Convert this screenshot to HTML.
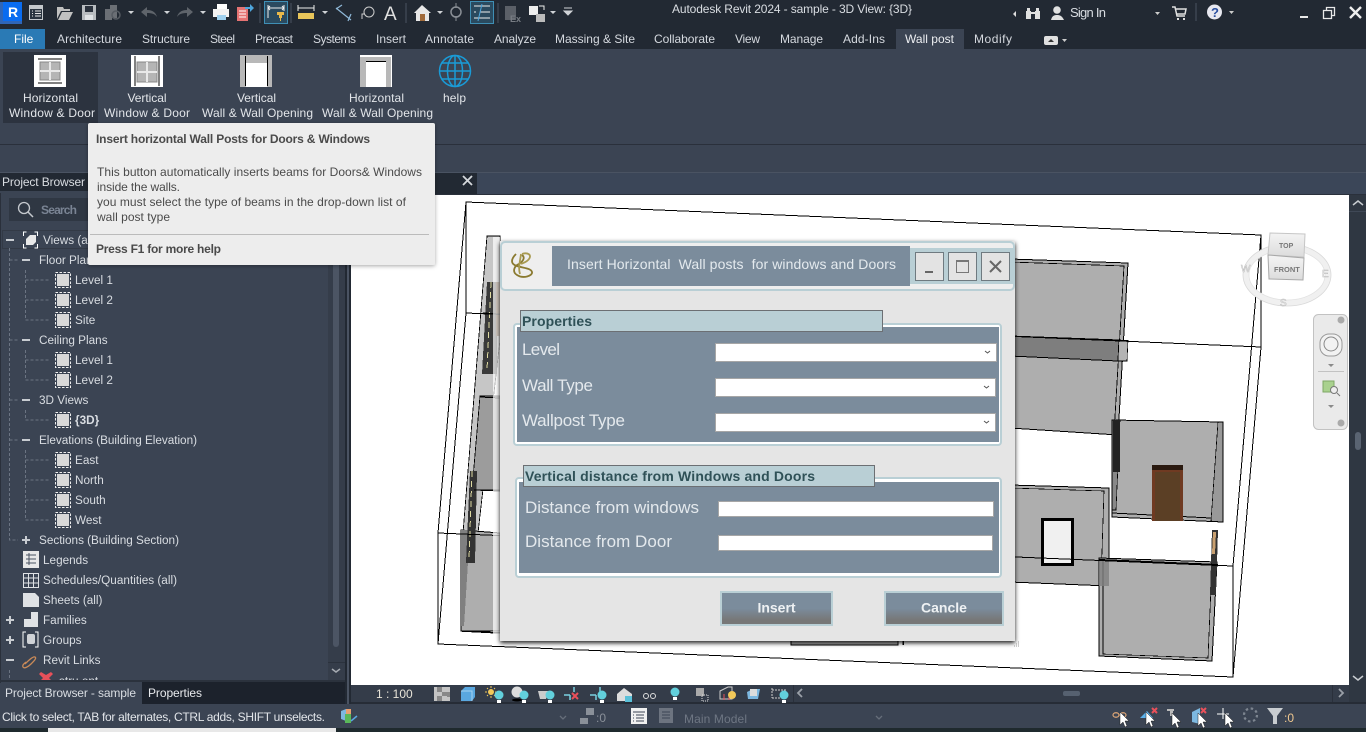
<!DOCTYPE html>
<html><head><meta charset="utf-8"><title>Autodesk Revit 2024</title>
<style>
html,body{margin:0;padding:0;width:1366px;height:732px;overflow:hidden;background:#3b4453}
svg{display:block}
text{font-family:"Liberation Sans",sans-serif;font-size:12px;fill:#d9dde2}
.tab{fill:#d5d9df}
.rb{fill:#e2e5e9;text-anchor:middle}
.tt{fill:#4a4a4a}
.lb{font-size:17px;fill:#e4e9ed}
.gh{font-size:14px;font-weight:bold;fill:#2f5157}
.dl{fill:none;stroke:#000;stroke-width:1}
.w{fill:#aeaeae;stroke:#000;stroke-width:1}
.tr text{font-size:11.75px}
</style></head><body>
<svg width="1366" height="732" viewBox="0 0 1366 732" xmlns="http://www.w3.org/2000/svg">
<defs>
<filter id="ds" x="-10%" y="-10%" width="120%" height="120%"><feDropShadow dx="0" dy="2" stdDeviation="2.500" flood-color="#000" flood-opacity=".9"/></filter>
<filter id="ts" x="-5%" y="-5%" width="110%" height="115%"><feDropShadow dx="0" dy="1" stdDeviation="2" flood-color="#000" flood-opacity=".35"/></filter>
<linearGradient id="bt" x1="0" y1="0" x2="0" y2="1"><stop offset=".5" stop-color="#7b8c9c"/><stop offset=".85" stop-color="#777"/></linearGradient>
<linearGradient id="cube" x1="0" y1="0" x2="0" y2="1"><stop offset="0" stop-color="#f4f4f4"/><stop offset="1" stop-color="#dcdcdc"/></linearGradient>
<clipPath id="tree"><rect x="0" y="228" width="328" height="452"/></clipPath>
<clipPath id="view"><rect x="351" y="195" width="998" height="490"/></clipPath>
<g id="lv"><rect x="55.500" y="-7.500" width="15" height="15" fill="#3b4453" stroke="#f0f0f0" stroke-dasharray="2.500 1.500"/><rect x="57" y="-6" width="12" height="12" fill="#d8d8d8"/></g>
<g id="cur"><path d="M0 0v13l3-3 2 5 2-1-2-5h4z" fill="#fff" stroke="#222" stroke-width=".5"/></g>
<g id="bulb"><circle cx="0" cy="0" r="4.500" fill="#62d0dc"/><rect x="-2" y="5" width="4" height="3" fill="#fff"/></g>
</defs>

<!-- base -->
<rect width="1366" height="732" fill="#3b4453"/>
<rect width="1366" height="49" fill="#222933"/>
<rect y="144" width="1366" height="1" fill="#2a303b"/>
<rect y="172" width="1366" height="1" fill="#4a5362"/>

<!-- QAT -->
<rect x="0" y="2" width="22" height="22" fill="#2f66b8"/><rect x="3" y="2" width="19" height="19" fill="#0a6cf0"/>
<text x="8" y="17" style="font-size:14px;font-weight:bold;fill:#fff">R</text>
<rect x="29.500" y="5.500" width="13" height="14" fill="#2a3440" stroke="#c4c8cc"/><rect x="30" y="6" width="12" height="3" fill="#c4c8cc"/><path d="M35 11h6M35 13.500h6M35 16h6M32 11h1M32 13.500h1M32 16h1" stroke="#e8e8e8"/>
<path d="M57 19V7h6l1 2h6v2h-9l-4 8zM58 20l4-8h11l-4 8z" fill="#c0c0c0"/>
<path d="M82 5h14v15H82z" fill="#b8bcc0"/><rect x="85" y="6" width="8" height="6" fill="#2a313c"/><rect x="85" y="15" width="8" height="5" fill="#dfe2e5"/>
<g fill="#6b6f75"><rect x="105" y="9" width="7" height="11"/><rect x="110" y="5" width="7" height="13"/></g><circle cx="116" cy="15" r="4" fill="none" stroke="#555a61" stroke-width="1.500"/>
<path d="M128 11h6l-3 3zM164 11h6l-3 3zM200 11h6l-3 3zM322 11h6l-3 3zM437 11h6l-3 3zM550 11h6l-3 3z" fill="#d0d3d7"/>
<path d="M141 12l6-5v3c6 0 9 3 10 7-2-3-5-4-10-4v4z" fill="#5f646b"/>
<path d="M193 12l-6-5v3c-6 0-9 3-10 7 2-3 5-4 10-4v4z" fill="#5f646b"/>
<rect x="217" y="4" width="10" height="5" fill="#fff"/><rect x="213" y="9" width="16" height="8" fill="#f2f2f2"/><rect x="217" y="15" width="9" height="5" fill="#9fd0ee"/>
<rect x="237" y="7" width="11" height="14" fill="#e57373"/><path d="M239 11h7M239 14h7M239 17h7" stroke="#fff"/><path d="M245 7h5V4l4 4-4 4V9h-5z" fill="#4ea6dc"/>
<path d="M260 3v20M291 3v20M406 3v20M498 3v20" stroke="#4a5362"/>
<rect x="264.500" y="1.500" width="23" height="22" fill="#2a4a5f" stroke="#3f8fb5"/><path d="M268 5v13M284 5v6M268 8h16M268 8l2-2M268 8l2 2M284 8l-2-2M284 8l-2 2" stroke="#eee" fill="none"/><path d="M277 12h7v3h-2v3h-3v-3h-2z" fill="#e8b94a"/><rect x="280" y="18" width="1" height="3" fill="#e8b94a"/>
<rect x="298" y="13" width="16" height="6" fill="#e8c55a"/><path d="M298 8h16M298 5v6M314 5v6" stroke="#eee" fill="none"/>
<path d="M336 8l15 12M342 5l-6 4M351 14l-3 7" stroke="#8fb8d8" stroke-width="1.200" fill="none"/>
<circle cx="369" cy="12" r="5" fill="none" stroke="#ccc"/><path d="M362 19v-5h3" stroke="#ccc" fill="none"/>
<text x="384" y="20" style="font-size:19px;fill:#e0e0e0">A</text>
<path d="M414 13l8-8 9 8h-2v8h-13v-8z" fill="#e8e8e8"/><rect x="420" y="14" width="5" height="7" fill="#a06a3a"/>
<circle cx="456" cy="12" r="5" fill="none" stroke="#8a8f96" stroke-width="1.500"/><path d="M456 3v5M456 16v5" stroke="#8a8f96"/>
<rect x="470.500" y="1.500" width="23" height="22" fill="#2a4a5f" stroke="#3f8fb5"/><path d="M474 6h16M480 12h10M474 18h16M474 12h2" stroke="#eee"/><path d="M482 4l-4 17" stroke="#4ea6dc"/>
<rect x="505" y="6" width="11" height="14" fill="#5b6068"/><text x="510" y="22" style="font-size:9px;font-weight:bold;fill:#777c83">Ex</text>
<rect x="529" y="6" width="9" height="9" fill="#eee"/><rect x="536" y="14" width="9" height="8" fill="#bbb"/><path d="M539 6h5v4" stroke="#eee" fill="none"/>
<path d="M564 8h8M564 11h8l-4 4z" fill="#d0d3d7" stroke="#d0d3d7"/>

<text x="672" y="13" textLength="240">Autodesk Revit 2024 - sample - 3D View: {3D}</text>
<path d="M1016 11l-3 3 3 3z" fill="#ddd"/>
<path d="M1027 8h3v3h1v8h-5v-8h1zM1036 8h3v3h1v8h-5v-8h1z" fill="#e0e0e0"/><rect x="1031" y="12" width="4" height="2" fill="#e0e0e0"/>
<circle cx="1057" cy="10" r="3.800" fill="#e0e0e0"/><path d="M1051 20c1-4 3-5 6-5s5 1 7 5z" fill="#e0e0e0"/>
<text x="1070" y="17" style="font-size:13px" textLength="36">Sign In</text>
<path d="M1155 12h5l-2.500 3zM1229 11h5l-2.500 3z" fill="#ccc"/>
<path d="M1172 7h3l2 9h8M1176 9h10l-1 5h-8" fill="none" stroke="#e0e0e0" stroke-width="1.500"/><path d="M1177 18h2v2h-2zM1183 18h2v2h-2z" fill="#e0e0e0"/>
<path d="M1196 3v18" stroke="#4a5362"/>
<circle cx="1214.500" cy="12" r="7.500" fill="#e8e8f0"/><text x="1211" y="17" style="font-size:13px;font-weight:bold;fill:#2a4fa0">?</text>
<rect x="1300" y="16" width="8" height="2" fill="#e8e8e8"/>
<path d="M1326.500 10.500v-3h8v8h-3M1323.500 10.500h8v8h-8z" fill="none" stroke="#e8e8e8" stroke-width="1.300"/>
<path d="M1350 7l11 11M1361 7l-11 11" stroke="#eee" stroke-width="2.400"/>

<!-- tabs -->
<rect x="0" y="29" width="45" height="20" fill="#2a7ab5"/>
<text x="14" y="43" style="fill:#fff">File</text>
<rect x="896" y="29" width="68" height="20" fill="#3b4453"/>
<g class="tabs">
<text class="tab" x="57" y="43" textLength="65">Architecture</text>
<text class="tab" x="142" y="43" textLength="48">Structure</text>
<text class="tab" x="210" y="43" textLength="25">Steel</text>
<text class="tab" x="255" y="43" textLength="38">Precast</text>
<text class="tab" x="313" y="43" textLength="43">Systems</text>
<text class="tab" x="376" y="43" textLength="30">Insert</text>
<text class="tab" x="425" y="43" textLength="49">Annotate</text>
<text class="tab" x="494" y="43" textLength="42">Analyze</text>
<text class="tab" x="555" y="43" textLength="80">Massing &amp; Site</text>
<text class="tab" x="654" y="43" textLength="61">Collaborate</text>
<text class="tab" x="735" y="43" textLength="25">View</text>
<text class="tab" x="780" y="43" textLength="43">Manage</text>
<text class="tab" x="843" y="43" textLength="42">Add-Ins</text>
<text class="tab" x="905" y="43" textLength="49" style="fill:#eceef1">Wall post</text>
<text class="tab" x="974" y="43" textLength="38">Modify</text>
</g>
<rect x="1044" y="36" width="14" height="9" rx="2" fill="#e0e0e0"/><path d="M1048 42l3-3 3 3z" fill="#333"/><path d="M1062 39h5l-2.500 3z" fill="#ccc"/>

<!-- ribbon buttons -->
<rect x="3" y="52" width="95" height="71" fill="#2c333f"/>
<g>
<rect x="34" y="55" width="32" height="32" fill="#fff"/><rect x="40" y="62" width="20" height="18" fill="#b5b5b5" stroke="#888"/><path d="M50 62v18M40 71h20" stroke="#e8e8e8" stroke-width="2"/><path d="M38 59h24M38 83h24" stroke="#000"/>
<rect x="131" y="55" width="32" height="32" fill="#fff"/><rect x="137" y="62" width="20" height="20" fill="#b5b5b5" stroke="#888"/><path d="M147 62v20M137 72h20" stroke="#e8e8e8" stroke-width="2"/><path d="M135 56v30M159 56v30" stroke="#000"/>
<rect x="240" y="55" width="32" height="32" fill="#b8b8b8"/><rect x="246" y="63" width="21" height="24" fill="#fff"/><path d="M245.500 56v30M267.500 56v30" stroke="#000"/>
<rect x="360" y="55" width="32" height="32" fill="#b8b8b8"/><rect x="360" y="55" width="32" height="2" fill="#fff"/><rect x="391" y="55" width="1" height="32" fill="#fff"/><rect x="366" y="62" width="20" height="25" fill="#fff"/><path d="M366 61.500h20" stroke="#000"/>
<g fill="none" stroke="#1a9bd7" stroke-width="1.500"><circle cx="455" cy="71" r="15.500"/><ellipse cx="455" cy="71" rx="7.500" ry="15.500"/><path d="M455 55v32M440 71h31M442 63h26M442 79h26"/></g>
</g>
<text class="rb" x="50.500" y="102" textLength="55">Horizontal</text><text class="rb" x="52" y="117" textLength="86">Window &amp; Door</text>
<text class="rb" x="147" y="102" textLength="39">Vertical</text><text class="rb" x="147" y="117" textLength="86">Window &amp; Door</text>
<text class="rb" x="256.500" y="102" textLength="39">Vertical</text><text class="rb" x="257.500" y="117" textLength="111">Wall &amp; Wall Opening</text>
<text class="rb" x="376.500" y="102" textLength="55">Horizontal</text><text class="rb" x="377.500" y="117" textLength="111">Wall &amp; Wall Opening</text>
<text class="rb" x="454.500" y="102" textLength="23">help</text>

<!-- project browser -->
<rect x="0" y="173" width="345" height="18" fill="#222933"/>
<text x="2" y="186" textLength="83">Project Browser</text>
<rect x="9" y="198" width="90" height="23" fill="#2f3743"/>
<circle cx="24" cy="208" r="5.500" fill="none" stroke="#c5c9ce" stroke-width="1.300"/><path d="M28 212l5 5" stroke="#c5c9ce" stroke-width="1.500"/>
<text x="41" y="214" style="font-weight:bold;fill:#7a8494" textLength="36">Search</text>
<rect x="2.500" y="230.500" width="326" height="18" fill="none" stroke="#333a46"/>
<rect x="328" y="225" width="17" height="457" fill="#353d4a"/>
<rect x="333" y="225" width="6" height="422" rx="3" fill="#4c5564"/>
<path d="M332 669l4 3 4-3" fill="none" stroke="#a5aab1" stroke-width="1.500"/>
<rect x="328" y="662" width="17" height="1" fill="#2b323d"/>
<rect x="0" y="193" width="1" height="490" fill="#2a303b"/>
<rect x="345" y="173" width="6" height="531" fill="#222933"/><rect x="347" y="173" width="2" height="531" fill="#4a5362"/>

<g clip-path="url(#tree)" class="tr">
<g fill="none" stroke="#6b7482" stroke-dasharray="3 2">
<path d="M9.500 248V540H18M9.500 260H18M9.500 340H18M9.500 400H18M9.500 440H18"/>
<path d="M25.500 270V320H50M25.500 280H50M25.500 300H50M25.500 350V380H50M25.500 360H50M25.500 410V420H50M25.500 450V520H50M25.500 460H50M25.500 480H50M25.500 500H50M9.500 670V690"/>
</g>
<path d="M6 239h8v2H6zM22 259h8v2h-8zM22 339h8v2h-8zM22 399h8v2h-8zM22 439h8v2h-8zM22 539h8v2h-8zM25 536h2v8h-2zM6 619h8v2H6zM9 616h2v8H9zM6 639h8v2H6zM9 636h2v8H9zM6 659h8v2H6z" fill="#c8ccd1"/>
<path d="M23.500 236v-4h3M34.500 232h3v4M37.500 244v4h-3M26.500 248h-3v-4" fill="none" stroke="#fff"/>
<path d="M26 239l4-4h6v7l-3 3h-7z" fill="#e8e8e8"/>
<text x="43" y="244">Views (all)</text>
<text x="39" y="264">Floor Plans</text>
<use href="#lv" y="280"/><text x="75" y="284">Level 1</text>
<use href="#lv" y="300"/><text x="75" y="304">Level 2</text>
<use href="#lv" y="320"/><text x="75" y="324">Site</text>
<text x="39" y="344">Ceiling Plans</text>
<use href="#lv" y="360"/><text x="75" y="364">Level 1</text>
<use href="#lv" y="380"/><text x="75" y="384">Level 2</text>
<text x="39" y="404">3D Views</text>
<use href="#lv" y="420"/><text x="75" y="424" style="font-weight:bold">{3D}</text>
<text x="39" y="444" textLength="158">Elevations (Building Elevation)</text>
<use href="#lv" y="460"/><text x="75" y="464">East</text>
<use href="#lv" y="480"/><text x="75" y="484">North</text>
<use href="#lv" y="500"/><text x="75" y="504">South</text>
<use href="#lv" y="520"/><text x="75" y="524">West</text>
<text x="39" y="544" textLength="140">Sections (Building Section)</text>
<rect x="23" y="551" width="16" height="17" fill="#e8e8e8"/><path d="M26 555h10M26 559h10M26 563h10M29 553v12" stroke="#4a5362"/>
<text x="43" y="564">Legends</text>
<path d="M23.500 573.500h15v14h-15zM23.500 578h15M23.500 583h15M28.500 574v13M33.500 574v13" fill="none" stroke="#dfe2e5"/>
<text x="43" y="584" textLength="134">Schedules/Quantities (all)</text>
<path d="M23 593h12l4 4v10H23z" fill="#dfe2e5"/>
<text x="43" y="604">Sheets (all)</text>
<path d="M24 612h14v15H24z" fill="#dfe2e5"/><path d="M24 612h7v7h-7z" fill="#3b4453"/>
<text x="43" y="624">Families</text>
<path d="M26 632h-3v15h3M35 632h3v15h-3" fill="none" stroke="#fff"/><rect x="27" y="634" width="8" height="10" rx="2" fill="#cfd2d6"/>
<text x="43" y="644">Groups</text>
<path d="M25 664c3-3 8-8 10-7 2 1-1 4-4 7s-7 5-8 3 1-3 3-5" fill="none" stroke="#c98a58" stroke-width="1.300"/>
<text x="43" y="664">Revit Links</text>
<path d="M41 672l5 3 5-3 2 2-4 4 4 4-14 0 4-4-4-4z" fill="#e8505a"/>
<text x="59" y="685">stru.ont</text>
</g>

<!-- bottom panel tabs -->
<rect x="0" y="680" width="345" height="2" fill="#2b323d"/>
<rect x="142" y="682" width="203" height="22" fill="#1c222c"/>
<text x="5" y="697" textLength="131">Project Browser - sample</text>
<text x="148" y="697" textLength="54" style="fill:#e8eaed">Properties</text>

<!-- doc tab strip -->
<rect x="351" y="173" width="1015" height="21" fill="#3b4658"/>
<rect x="435" y="173" width="42" height="21" fill="#222933"/>
<path d="M463 176l9 9M472 176l-9 9" stroke="#d5d8dc" stroke-width="1.800"/>
<rect x="351" y="194" width="1015" height="1" fill="#2a303b"/>

<!-- view -->
<rect x="351" y="195" width="998" height="490" fill="#fff"/>
<rect x="1349" y="195" width="17" height="507" fill="#2f3742"/>
<path d="M1353 205l5-4 5 4" fill="none" stroke="#c8ccd0" stroke-width="1.500"/>
<rect x="1349" y="211" width="17" height="1" fill="#3f4856"/>
<rect x="1355" y="432" width="6" height="18" rx="3" fill="#5a6472"/>
<path d="M1353 676l5 4 5-4" fill="none" stroke="#c8ccd0" stroke-width="1.500"/>

<g clip-path="url(#view)">
<g shape-rendering="crispEdges">
<!-- left walls -->
<path d="M487 236L500 236V340L478 533H463z" fill="#c6c6c6" stroke="#000" stroke-width=".8"/>
<path d="M480 396L500 396V490H472z" fill="#9c9c9c" stroke="#000" stroke-width=".8"/>
<path d="M461 530L500 533V631H461z" fill="#aeaeae" stroke="#000"/>
<path d="M461 530H470L464 626H461z" fill="#808080"/>
<path d="M487 282H497V374H482z" fill="#3a3a3a"/><path d="M491 282L487 370" stroke="#ddd9a0" stroke-dasharray="6 4"/>
<path d="M470 471H477L475 563H466z" fill="#333"/><path d="M472 471L469 560" stroke="#ddd9a0" stroke-dasharray="6 4"/>
<rect x="496" y="282" width="4" height="54" fill="#5c3a20"/>
<path d="M462 631L500 633" stroke="#000" stroke-width="1.500"/><path d="M474 490L500 491M480 397L500 398M483 313L500 314" stroke="#000"/>
<!-- right walls -->
<path class="w" d="M1010 259L1128 263L1118 435L1010 428z"/>
<path d="M1010 262L1124 266L1114 433" fill="none" stroke="#000" stroke-width=".8"/>
<path d="M1010 336L1119 340L1118 361L1010 356z" fill="#7e7e7e" stroke="#000"/>
<path d="M1119 340L1128 340.500L1127 361L1118 361z" fill="#b4b4b4" stroke="#000" stroke-width=".7"/>
<path class="w" d="M1112 420L1223 422L1223 522L1112 517z"/>
<path d="M1218 422L1223 422V522L1211 521z" fill="#999" stroke="#000" stroke-width=".7"/>
<path d="M1112 420H1120L1116 510H1112z" fill="#888" stroke="#000" stroke-width=".7"/>
<rect x="1113" y="420" width="7" height="52" fill="#222"/>
<path d="M1112 513L1211 518" stroke="#000" fill="none"/>
<rect x="1152" y="465" width="31" height="6" fill="#2a1a10"/><rect x="1152" y="470" width="31" height="51" fill="#6f3a22"/><rect x="1155" y="472" width="25" height="49" fill="#5b3f25"/>
<path class="w" d="M1010 485L1109 488L1109 586L1010 582z"/>
<path d="M1010 488L1104 491L1101 582" fill="none" stroke="#000" stroke-width=".7"/>
<path d="M1100 558h9v28h-9z" fill="#8a8a8a"/>
<rect x="1042.500" y="519.500" width="30" height="45" fill="#f0f0f0" stroke="#000" stroke-width="3"/>
<path class="w" d="M1099 558L1217 562L1212 661L1099 656z"/>
<path d="M1103 560L1212 564L1208 658L1103 654z" fill="none" stroke="#000" stroke-width=".7"/><path d="M1099 560H1109V586H1099z" fill="#808080" opacity=".8"/>
<path d="M1212 530h6l-2 65h-6z" fill="#333"/><path d="M1213 532h3l-1 22h-3z" fill="#c9a070"/>
<path d="M1099 560L1218 565" stroke="#000" stroke-width="2"/>
<rect x="791" y="636" width="107" height="9" fill="#aeaeae" stroke="#000"/><path d="M903 636v9" stroke="#000" stroke-width="1.500"/>
<!-- wireframe -->
<path class="dl" d="M466 202L1261 235L1233 566L438 533zM466 313L1261 347L1233 677L438 644zM466 202V313M1261 235V347M438 533V644M1233 566V677"/>
</g>
<!-- viewcube -->
<ellipse cx="1287" cy="275" rx="41" ry="28" fill="none" stroke="#f0f0f0" stroke-width="6"/>
<ellipse cx="1287" cy="275" rx="44" ry="31" fill="none" stroke="#d8d8d8" stroke-width=".8"/>
<ellipse cx="1287" cy="275" rx="38" ry="25" fill="none" stroke="#e2e2e2" stroke-width=".8"/>
<path d="M1270 233L1305 234L1304 257L1268 255z" fill="url(#cube)" stroke="#c6c6c6"/>
<path d="M1268 255L1304 258L1303 280L1269 279z" fill="url(#cube)" stroke="#a8a8a8"/>
<text x="1279" y="248" style="font-size:7px;fill:#777;font-weight:bold">TOP</text>
<text x="1274" y="272" style="font-size:7.500px;fill:#777;font-weight:bold">FRONT</text>
<text x="1241" y="272" style="font-size:10px;fill:#fff;stroke:#bbb;stroke-width:.5">W</text>
<text x="1322" y="277" style="font-size:10px;fill:#fff;stroke:#bbb;stroke-width:.5">E</text>
<text x="1280" y="306" style="font-size:10px;fill:#fff;stroke:#bbb;stroke-width:.5">S</text>
<!-- nav bar -->
<rect x="1313.500" y="314.500" width="34" height="115" rx="5" fill="#eaeaea" stroke="#c2c2c2"/>
<circle cx="1341" cy="320" r="3.500" fill="#aaa"/>
<rect x="1320" y="334" width="22" height="22" rx="9" fill="#f2f2f2" stroke="#999"/><circle cx="1331" cy="344" r="7" fill="none" stroke="#888"/>
<path d="M1328 364h6l-3 3zM1328 405h6l-3 3z" fill="#8a8a8a"/>
<path d="M1318 371.500h26" stroke="#c2c2c2"/>
<rect x="1323" y="381" width="11" height="11" fill="#a9d18e" stroke="#7fa866"/><circle cx="1334" cy="390" r="3.500" fill="#eee" stroke="#777"/><path d="M1337 393l3 3" stroke="#777"/>
<circle cx="1341" cy="423" r="3.500" fill="#aaa"/>
</g>

<!-- view control bar -->
<rect x="351" y="685" width="998" height="17" fill="#343c49"/>
<rect x="351" y="702" width="1015" height="2" fill="#262c36"/>
<text x="376" y="698" style="fill:#e8e4d8">1 : 100</text>
<rect x="434" y="687" width="16" height="14" fill="#c4c4c4"/><path d="M437 687h5v5h-5zM447 692h3v5h-3zM437 696h5v5h-5zM442 692h5v4h-5z" fill="#888"/>
<path d="M461 691l4-4h10v10l-3 4h-11z" fill="#5aa8e0"/><path d="M461 691h11v10" fill="none" stroke="#a6d4f2"/>
<circle cx="491" cy="692" r="3" fill="#f2c95a"/><path d="M491 686v2M491 696v2M485 692h2M495 692h2M487 688l1 1M494 695l1 1M487 696l1-1M494 689l1-1" stroke="#f2c95a"/><use href="#bulb" transform="translate(499,695)"/>
<circle cx="517" cy="692" r="5.500" fill="#ddd"/><ellipse cx="517" cy="700" rx="5" ry="1.500" fill="#000"/><use href="#bulb" transform="translate(524,695)"/>
<path d="M538 691h10l-2 8h-6z" fill="#ccc"/><use href="#bulb" transform="translate(550,695)"/>
<path d="M564 695h6M574 687v5M570 700v-5" stroke="#7ad0e0" stroke-width="1.500"/><path d="M572 693l6 6M578 693l-6 6" stroke="#e8505a" stroke-width="2"/>
<path d="M590 695h6M600 687v5M596 700v-5" stroke="#7ad0e0" stroke-width="1.500"/><use href="#bulb" transform="translate(602,695)"/>
<path d="M617 694l7-6 8 6v7h-15z" fill="#ddd"/><rect x="625" y="696" width="7" height="6" fill="#5ac0d8"/>
<circle cx="646" cy="696" r="2.500" fill="none" stroke="#ddd"/><circle cx="653" cy="696" r="2.500" fill="none" stroke="#ddd"/>
<use href="#bulb" transform="translate(675,692)"/>
<rect x="696" y="688" width="8" height="8" fill="#aaa"/><rect x="702" y="695" width="6" height="6" fill="none" stroke="#ddd" stroke-dasharray="1 1"/>
<path d="M720 691l8-4h4v12h-12z" fill="none" stroke="#ccc"/><path d="M724 694v6M729 694v6" stroke="#e8505a"/><circle cx="732" cy="695" r="4" fill="#f2c95a"/>
<path d="M747 692l6-3h7l-2 10h-10z" fill="#7db8e0"/><rect x="750" y="689" width="7" height="7" fill="#ddd"/>
<path d="M772 688v10M772 690h14M772 698h10" stroke="#ccc" fill="none" stroke-dasharray="2 1"/><use href="#bulb" transform="translate(784,695)"/>
<rect x="793" y="685" width="1" height="17" fill="#2a303b"/>
<path d="M802 689l-4 4 4 4" fill="none" stroke="#9aa0a8" stroke-width="1.800"/>
<rect x="1063" y="691" width="17" height="5" rx="2" fill="#566170"/>
<path d="M1339 689l4 4-4 4" fill="none" stroke="#9aa0a8" stroke-width="1.800"/><rect x="1332" y="685" width="1" height="17" fill="#2a303b"/>

<!-- status bar -->
<text x="2" y="721" textLength="323" style="fill:#e2e5e9">Click to select, TAB for alternates, CTRL adds, SHIFT unselects.</text>
<path d="M341 711l5-2v12l-5-2z" fill="#7db8e0"/><rect x="346" y="709" width="5" height="7" fill="#e8a070"/><rect x="345" y="714" width="6" height="9" fill="#5ab85a"/><path d="M351 721l6-5" stroke="#5aa8e0" stroke-width="1.500"/>
<path d="M560 716l3 3 3-3M876 716l3 3 3-3" fill="none" stroke="#666e7a" stroke-width="1.300"/>
<path d="M580 718h8v6h-8zM586 708h8v7h-8z" fill="#8a9099"/>
<text x="596" y="722" style="fill:#8a9099">:0</text>
<rect x="631" y="708" width="16" height="16" fill="#f0f0f0"/><path d="M633 712h12" stroke="#3b4453"/><path d="M636 715h8M636 718h8M636 721h8M633 715h1M633 718h1M633 721h1" stroke="#3b4453"/>
<rect x="659" y="708" width="14" height="15" fill="#6d7480"/><path d="M662 712h8M662 715h8M662 718h8" stroke="#3b4453"/>
<text x="684" y="723" style="fill:#6e7683" textLength="63">Main Model</text>
<path d="M1113 715c0-3 6-3 6 0s-6 3-6 0zM1120 715c0-3 6-3 6 0s-6 3-6 0z" fill="none" stroke="#e0a878" stroke-width="1.200"/><use href="#cur" x="1120" y="712"/>
<path d="M1140 718l7-7 6 7z" fill="#5ab0ea"/><use href="#cur" x="1146" y="712"/><path d="M1152 708l5 5M1157 708l-5 5" stroke="#e8505a" stroke-width="2"/>
<path d="M1167 709h7v2h-1v5h-3v-5h-3z" fill="#bbb"/><use href="#cur" x="1172" y="713"/>
<path d="M1192 712l8-4v16l-8-2z" fill="#7db8e0"/><use href="#cur" x="1198" y="713"/><path d="M1201 708l5 5M1206 708l-5 5" stroke="#e8505a" stroke-width="2"/>
<path d="M1217 714h12M1223 708v11" stroke="#fff"/><use href="#cur" x="1225" y="713"/>
<circle cx="1250.500" cy="715" r="6.500" fill="none" stroke="#7d8590" stroke-width="2.200" stroke-dasharray="2.500 2.600"/>
<path d="M1267 708h16l-6 8v8h-4v-8z" fill="#c8ccd0"/>
<text x="1284" y="722" style="fill:#f0c890">:0</text>

<rect x="0" y="728" width="1366" height="4" fill="#1f2a2e"/>
<rect x="48" y="728" width="288" height="4" fill="#e8e8e8"/>

<!-- tooltip -->
<g filter="url(#ts)"><rect x="88" y="123" width="347" height="142" rx="2" fill="#ededed"/></g>
<text class="tt" x="96" y="143" textLength="274" style="font-weight:bold">Insert horizontal Wall Posts for Doors &amp; Windows</text>
<text class="tt" x="97" y="176" textLength="325">This button automatically inserts beams for Doors&amp; Windows</text>
<text class="tt" x="97" y="191" textLength="83">inside the walls.</text>
<text class="tt" x="97" y="206" textLength="309">you must select the type of beams in the drop-down list of</text>
<text class="tt" x="97" y="221" textLength="73">wall post type</text>
<rect x="90" y="234" width="339" height="1" fill="#bbb"/>
<text class="tt" x="96" y="253" textLength="125" style="font-weight:bold">Press F1 for more help</text>

<!-- dialog -->
<rect x="493" y="237" width="7" height="404" fill="#fff" opacity=".7"/>
<g filter="url(#ds)"><rect x="500" y="241" width="515" height="400" fill="#e5e5e5"/></g>
<path d="M1016 646h1M1018 646h1M1016 644h1M1018 644h1M1014 646h1M1018 642h1" stroke="#9a9a9a"/>
<rect x="501" y="242" width="513" height="48" rx="4" fill="#eeeeee" stroke="#b9cfd5" stroke-width="2"/>
<rect x="552" y="246" width="358" height="40" fill="#7b8c9c"/>
<rect x="910" y="248" width="104" height="36" fill="#b9cfd5"/>
<rect x="915.500" y="252.500" width="28" height="28" fill="#e3e3e3" stroke="#6f7a80"/><rect x="925" y="271" width="8" height="2" fill="#666"/>
<rect x="948.500" y="252.500" width="28" height="28" fill="#e3e3e3" stroke="#6f7a80"/><rect x="956.500" y="260.500" width="12" height="12" fill="none" stroke="#777"/><rect x="956" y="260" width="13" height="2" fill="#777"/>
<rect x="981.500" y="252.500" width="28" height="28" fill="#e3e3e3" stroke="#6f7a80"/><path d="M990 261l11 11M1001 261l-11 11" stroke="#666" stroke-width="2"/>
<g fill="none" stroke="#8a7a30" stroke-width="1.800"><path d="M516 254c-5 5-6 10 1 12 6 2 14 2 15 6 1 4-9 7-15 3-5-3-3-9 2-11 3-2 7-6 3-9"/><path d="M521 254c-1 8-3 14-1 20M522 254c6-2 10 1 7 5-2 3-6 4-8 5" stroke="#a89a50"/></g>
<text x="567" y="269" textLength="329" style="font-size:14px;fill:#e4eaee">Insert Horizontal&#160; Wall posts&#160; for windows and Doors</text>

<rect x="514" y="324" width="487" height="121" rx="3" fill="#fff" stroke="#b9cfd5" stroke-width="2"/>
<rect x="517" y="327" width="482" height="115" fill="#7b8c9c"/>
<rect x="520.500" y="310.500" width="362" height="21" fill="#b9cfd5" stroke="#6c6f73"/>
<text class="gh" x="522" y="326" textLength="70">Properties</text>
<text class="lb" x="522" y="355" textLength="38">Level</text>
<text class="lb" x="522" y="391" textLength="71">Wall Type</text>
<text class="lb" x="522" y="426" textLength="103">Wallpost Type</text>
<rect x="715.500" y="343.500" width="281" height="18" fill="#fff" stroke="#a6a6a6"/>
<rect x="715.500" y="378.500" width="280" height="18" fill="#fff" stroke="#a6a6a6"/>
<rect x="715.500" y="413.500" width="280" height="18" fill="#fff" stroke="#a6a6a6"/>
<path d="M985 351l2.500 2 2.500-2M984 386l2.500 2 2.500-2M984 421l2.500 2 2.500-2" fill="none" stroke="#555"/>

<rect x="516" y="478" width="485" height="99" rx="3" fill="#fff" stroke="#b9cfd5" stroke-width="2"/>
<rect x="519" y="482" width="480" height="91" fill="#7b8c9c"/>
<rect x="523.500" y="465.500" width="351" height="21" fill="#b9cfd5" stroke="#6c6f73"/>
<text class="gh" x="525" y="481" textLength="290">Vertical distance from Windows and Doors</text>
<text class="lb" x="525" y="513" textLength="174">Distance from windows</text>
<text class="lb" x="525" y="547" textLength="147">Distance from Door</text>
<rect x="718.500" y="501.500" width="275" height="15" fill="#fff" stroke="#a6a6a6"/>
<rect x="718.500" y="535.500" width="274" height="15" fill="#fff" stroke="#a6a6a6"/>

<rect x="721" y="592" width="111" height="33" fill="url(#bt)" stroke="#b9cfd5" stroke-width="2"/>
<rect x="885" y="592" width="118" height="33" fill="url(#bt)" stroke="#b9cfd5" stroke-width="2"/>
<text x="776.500" y="612.500" text-anchor="middle" style="font-size:14px;font-weight:bold;fill:#eef1f3">Insert</text>
<text x="944" y="612.500" text-anchor="middle" style="font-size:14px;font-weight:bold;fill:#eef1f3">Cancle</text>
</svg>
</body></html>
